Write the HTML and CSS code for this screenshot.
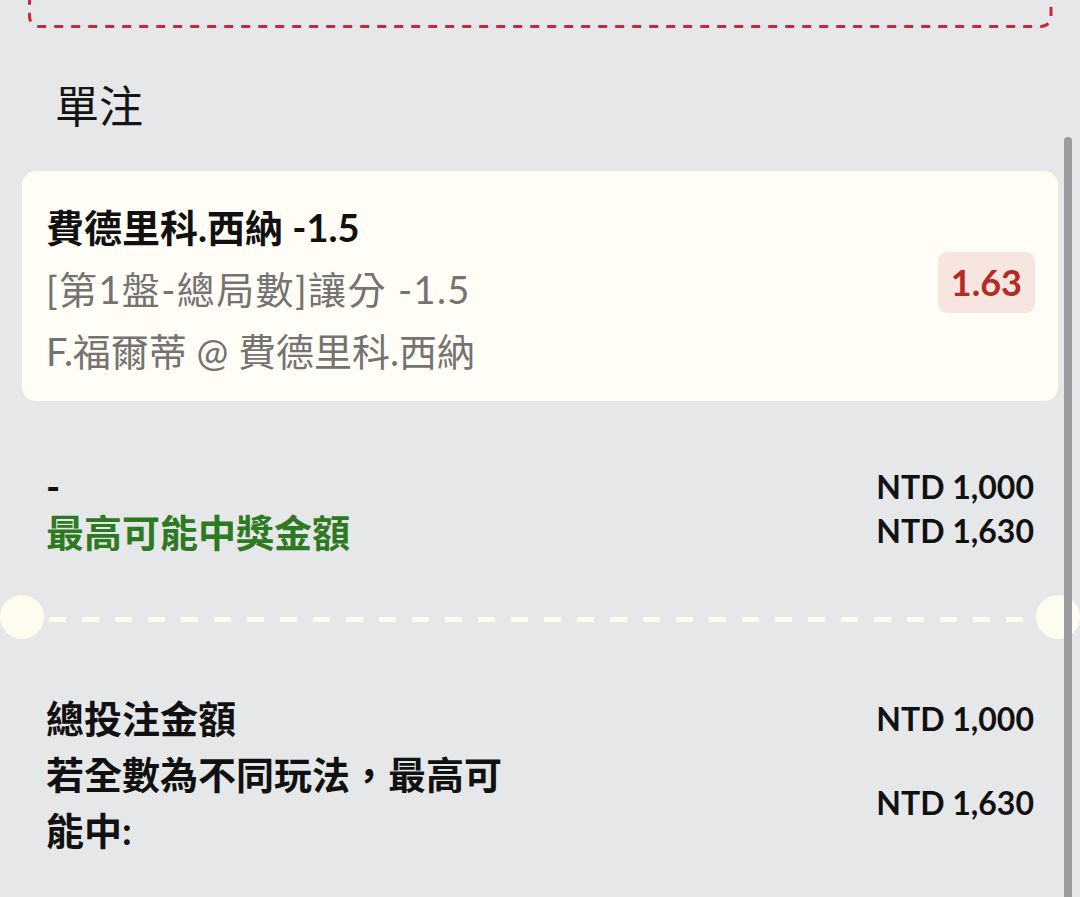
FILE: index.html
```html
<!DOCTYPE html>
<html lang="zh-Hant">
<head>
  <meta charset="UTF-8">
  <title>單注</title>
  <link rel="stylesheet" href="styles.css">
</head>
<body>
  <div class="page">
    <!-- bottom edge of the box above, scrolled mostly out of view -->
    <svg class="prev-box" width="1080" height="30" viewBox="0 0 1080 30">
      <rect x="29.5" y="-40" width="1021.5" height="66.5" rx="10" fill="none"
            stroke="#c8283a" stroke-width="3" stroke-dasharray="9 8"/>
    </svg>

    <h2 class="section-title">單注</h2>

    <div class="bet-card">
      <div class="bet-info">
        <div class="bet-name">費德里科.西納 -1.5</div>
        <div class="bet-sub market">[第1盤-總局數]讓分 -1.5</div>
        <div class="bet-sub">F.福爾蒂 @ 費德里科.西納</div>
      </div>
      <div class="odds">1.63</div>
    </div>

    <div class="amounts">
      <div class="row">
        <span class="label">-</span>
        <span class="value">NTD 1,000</span>
      </div>
      <div class="row">
        <span class="label win">最高可能中獎金額</span>
        <span class="value">NTD 1,630</span>
      </div>
    </div>

    <div class="divider"><span class="dashes"></span></div>

    <div class="summary">
      <div class="row">
        <span class="label">總投注金額</span>
        <span class="value">NTD 1,000</span>
      </div>
      <div class="row">
        <span class="label">若全數為不同玩法，最高可能中:</span>
        <span class="value">NTD 1,630</span>
      </div>
    </div>
  </div>

  <div class="scroll-thumb"></div>
</body>
</html>
```

FILE: styles.css
```css
body {
  margin: 0;
  background-color: #e6e7e9;
  font-family: Lato, "Noto Sans CJK TC", sans-serif;
  color: #111;
  overflow: hidden;
}
.page {
  width: 1080px;
}
.prev-box {
  display: block;
}
.section-title {
  margin: 44px 0 37px 0;
  padding-left: 55px;
  font-family: "Noto Sans CJK TC", sans-serif;
  font-size: 44px;
  font-weight: normal;
  line-height: 60px;
  color: #151515;
}
.bet-card {
  margin: 0 22px;
  padding: 25px 23px 19px 24px;
  background: #fffdf6;
  border-radius: 14px;
  display: flex;
  align-items: center;
  justify-content: space-between;
}
.bet-name {
  font-size: 38px;
  font-weight: bold;
  line-height: 62px;
}
.bet-sub {
  font-size: 38px;
  line-height: 62px;
  color: #747372;
}
.bet-sub.market {
  letter-spacing: 1.4px;
}
.odds {
  margin-bottom: 14px;
  padding: 0 13px;
  height: 61px;
  line-height: 61px;
  background: #f6e6df;
  border-radius: 9px;
  color: #b52a25;
  font-size: 36px;
  font-weight: bold;
}
.amounts {
  margin-top: 63px;
  padding: 0 46px;
}
.row {
  display: flex;
  justify-content: space-between;
  align-items: center;
}
.amounts .row {
  height: 44px;
}
.label {
  font-size: 38px;
  font-weight: bold;
}
.label.win {
  color: #2e7a22;
}
.value {
  font-size: 32px;
  font-weight: bold;
}
.divider {
  position: relative;
  height: 44px;
  margin-top: 43px;
  display: flex;
  align-items: center;
}
.divider::before,
.divider::after {
  content: "";
  position: absolute;
  top: 0;
  width: 44px;
  height: 44px;
  border-radius: 50%;
  background: #fffcf0;
}
.divider::before {
  left: 0;
}
.divider::after {
  right: 0;
}
.dashes {
  flex: 1;
  height: 5px;
  margin: 4px 48px 0 49px;
  background: repeating-linear-gradient(to right, #fffcf0 0 17px, transparent 17px 33px);
}
.summary {
  margin-top: 51px;
  padding: 0 46px;
}
.summary .label {
  width: 480px;
  line-height: 56px;
}
.scroll-thumb {
  position: fixed;
  top: 137px;
  right: 8px;
  bottom: -10px;
  width: 8px;
  border-radius: 4px;
  background: #9c9c9e;
}
```
